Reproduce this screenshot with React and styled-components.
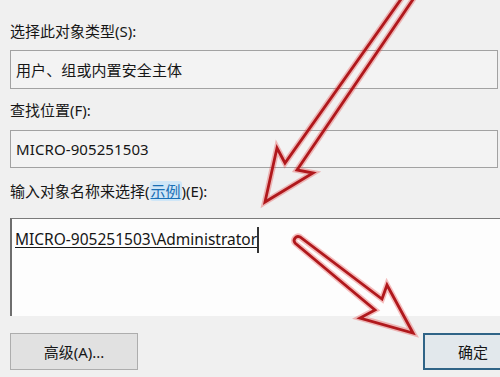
import React from 'react'
import styled, { createGlobalStyle } from 'styled-components'

const GlobalStyle = createGlobalStyle`
	body {
		margin: 0;
		background: #f0f0f0;
		overflow: hidden;
		font-family: 'Noto Sans', 'Noto Sans CJK SC', sans-serif;
	}
`

const App = () => {
	return (
		<Page>
			<GlobalStyle />
			<Dialog>
				<Label>选择此对象类型(S):</Label>
				<ReadBox $gap='9px'>用户、组或内置安全主体</ReadBox>
				<Label $gap='11px'>查找位置(F):</Label>
				<ReadBox $gap='10px' $height='38px'>
					MICRO-905251503
				</ReadBox>
				<Label $gap='13px'>
					输入对象名称来选择(<Link>示例</Link>)(E):
				</Label>
				<NameArea>
					<Typed>MICRO-905251503\Administrator</Typed>
					<Caret />
				</NameArea>
				<Buttons>
					<Button>高级(A)...</Button>
					<Button $primary>确定</Button>
				</Buttons>
			</Dialog>
			<Arrows viewBox='0 0 500 377'>
				<g fill='none' strokeLinejoin='miter'>
					<path
						d='M265,202 L277,148 L285,163 L404,-5 L416,-5 L297,170 L313,173 Z'
						stroke='rgba(230,70,70,0.35)'
						strokeWidth='6'
					/>
					<path
						d='M265,202 L277,148 L285,163 L404,-5 L416,-5 L297,170 L313,173 Z'
						stroke='#b0181c'
						strokeWidth='2.8'
					/>
					<path
						d='M413,333 L387,285 L382,299 L300,237 A4,4 0 0 0 295,243 L375,310 L360,318 Z'
						stroke='rgba(230,70,70,0.35)'
						strokeWidth='6'
					/>
					<path
						d='M413,333 L387,285 L382,299 L300,237 A4,4 0 0 0 295,243 L375,310 L360,318 Z'
						stroke='#b0181c'
						strokeWidth='2.8'
					/>
				</g>
			</Arrows>
		</Page>
	)
}

const Page = styled.div`
	position: relative;
	width: 500px;
	height: 377px;
	overflow: hidden;
	background: #f0f0f0;
`

const Dialog = styled.div`
	width: 540px;
	padding: 21px 0 0 10px;
	display: flex;
	flex-direction: column;
	align-items: flex-start;
	color: #161616;
`

const Label = styled.div`
	margin-top: ${(p) => p.$gap || '0'};
	font-size: 15px;
	line-height: 20px;
`

const Link = styled.span`
	color: #1a6fb5;
	background: #cfe6f7;
	border-radius: 3px;
	text-decoration: underline;
	padding: 0 1px;
`

const ReadBox = styled.div`
	margin-top: ${(p) => p.$gap || '0'};
	box-sizing: border-box;
	width: 488px;
	height: ${(p) => p.$height || '39px'};
	border: 1px solid #a2a2a2;
	background: #f3f3f3;
	padding-left: 5px;
	display: flex;
	align-items: center;
	font-size: 15px;
	letter-spacing: 0.1px;
`

const NameArea = styled.div`
	margin-top: 17px;
	box-sizing: border-box;
	width: 520px;
	height: 98px;
	background: #fdfdfd;
	border-top: 1px solid #7a7a7a;
	border-left: 2px solid #6e6e6e;
	padding: 9px 0 0 3px;
	display: flex;
	align-items: flex-start;
	font-size: 15.5px;
	line-height: 22px;
`

const Typed = styled.span`
	text-decoration: underline;
	text-underline-offset: 2px;
`

const Caret = styled.span`
	width: 0;
	height: 26px;
	margin-top: -1px;
	border-left: 2px solid #333;
`

const Buttons = styled.div`
	margin-top: 17px;
	width: 513px;
	display: flex;
	justify-content: space-between;
`

const Button = styled.div`
	box-sizing: border-box;
	width: ${(p) => (p.$primary ? '100px' : '128px')};
	height: 37px;
	display: flex;
	align-items: center;
	justify-content: center;
	font-size: 15px;
	background: ${(p) => (p.$primary ? '#e2e8ec' : '#e1e1e1')};
	border: ${(p) => (p.$primary ? '2px solid #2f6487' : '1px solid #adadad')};
`

const Arrows = styled.svg`
	position: absolute;
	left: 0;
	top: 0;
	width: 500px;
	height: 377px;
	pointer-events: none;
`

export default App
